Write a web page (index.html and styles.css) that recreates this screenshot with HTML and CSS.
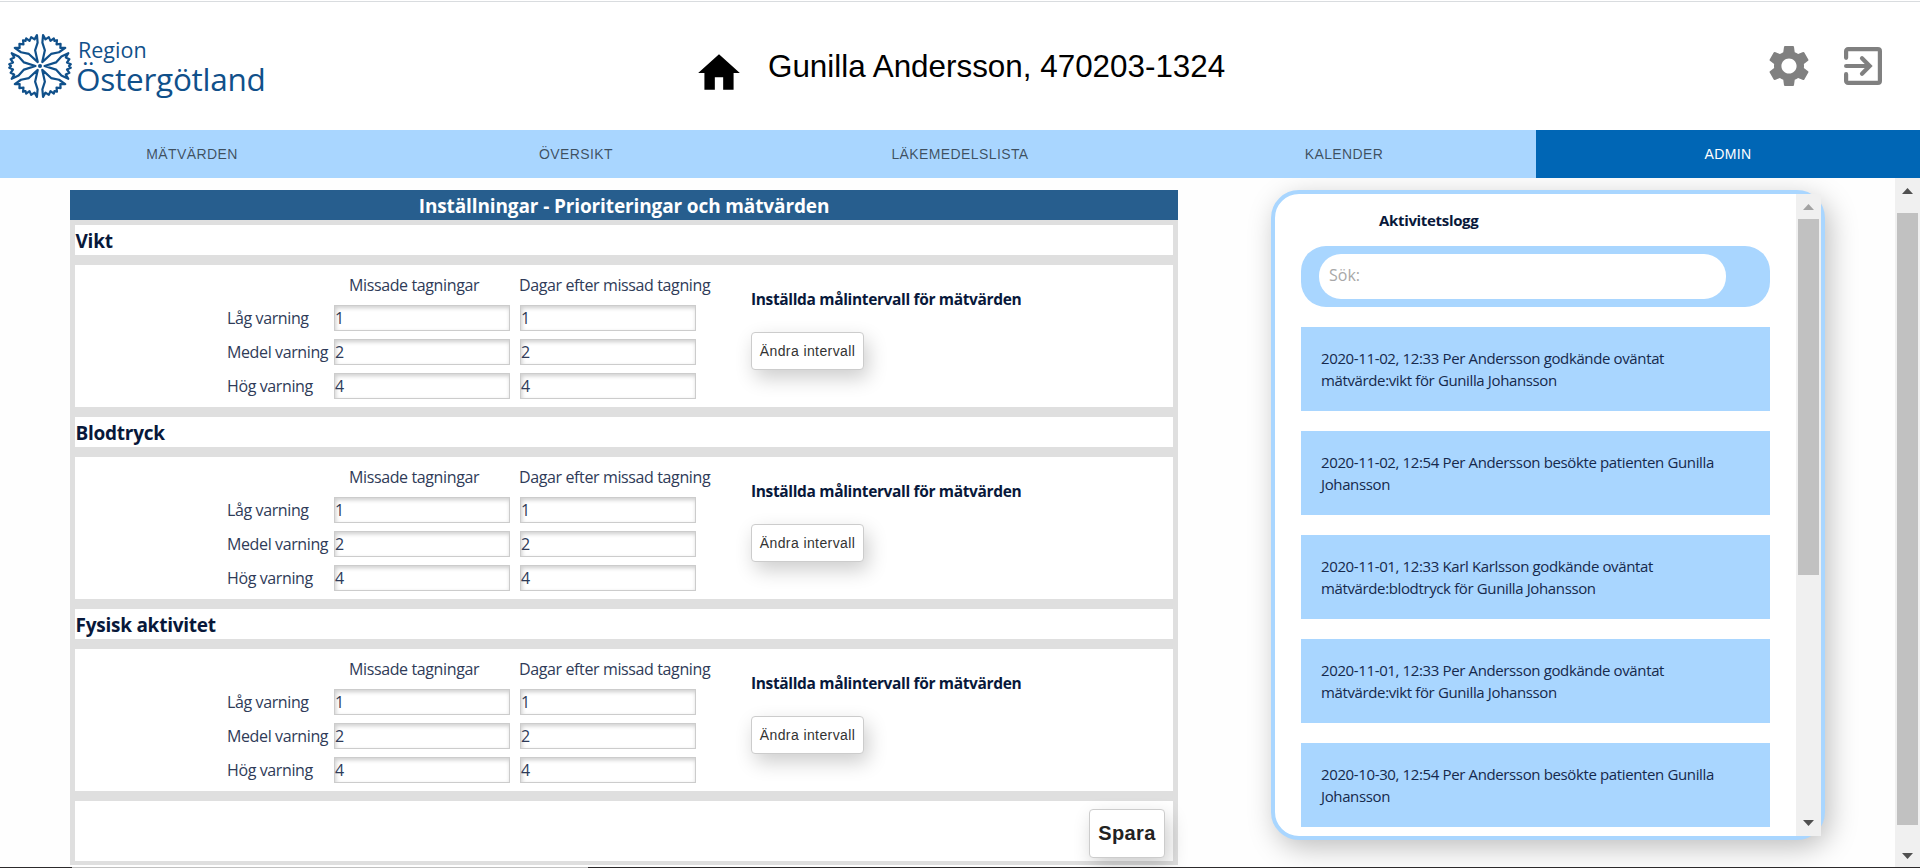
FILE: index.html
```html
<!DOCTYPE html>
<html lang="sv">
<head>
<meta charset="utf-8">
<title>Region Östergötland - Admin</title>
<link rel="stylesheet" href="styles.css">
</head>
<body>
<header class="header">
  <div class="logo">
    <svg class="logo-mark" viewBox="-33 -33 66 66" width="66" height="66">
      <defs>
        <path id="petal" d="M0-4.5-3.6-16-9.6-21.4-12.8-28.3-8.6-25.8-6.8-29.4-3.5-27-1.8-30.8 0-29 1.8-30.8 3.5-27 6.8-29.4 8.6-25.8 12.8-28.3 9.6-21.4 3.6-16Z"/>
      </defs>
      <g fill="none" stroke="#10508a" stroke-width="2.2" stroke-linejoin="round">
        <use href="#petal" transform="rotate(30)"/>
        <use href="#petal" transform="rotate(90)"/>
        <use href="#petal" transform="rotate(150)"/>
        <use href="#petal" transform="rotate(210)"/>
        <use href="#petal" transform="rotate(270)"/>
        <use href="#petal" transform="rotate(330)"/>
      </g>
      <circle r="2" fill="#10508a"/>
    </svg>
    <div class="logo-text">
      <span class="logo-small">Region</span>
      <span class="logo-large">Östergötland</span>
    </div>
  </div>
  <div class="patient">
    <svg class="home" viewBox="0 0 24 24" width="50" height="50"><path d="M10 20v-6h4v6h5v-8h3L12 3 2 12h3v8z"/></svg>
    <span class="patient-name">Gunilla Andersson, 470203-1324</span>
  </div>
  <div class="tools">
    <svg viewBox="0 0 24 24" width="48" height="48" fill="#808080"><path d="M19.43 12.98c.04-.32.07-.64.07-.98s-.03-.66-.07-.98l2.11-1.65c.19-.15.24-.42.12-.64l-2-3.46c-.12-.22-.39-.3-.61-.22l-2.49 1c-.52-.4-1.08-.73-1.69-.98l-.38-2.65C14.46 2.18 14.25 2 14 2h-4c-.25 0-.46.18-.49.42l-.38 2.65c-.61.25-1.17.59-1.69.98l-2.49-1c-.23-.09-.49 0-.61.22l-2 3.46c-.13.22-.07.49.12.64l2.11 1.65c-.04.32-.07.65-.07.98s.03.66.07.98l-2.11 1.65c-.19.15-.24.42-.12.64l2 3.46c.12.22.39.3.61.22l2.49-1c.52.4 1.08.73 1.69.98l.38 2.65c.03.24.24.42.49.42h4c.25 0 .46-.18.49-.42l.38-2.65c.61-.25 1.17-.59 1.69-.98l2.49 1c.23.09.49 0 .61-.22l2-3.46c.12-.22.07-.49-.12-.64l-2.11-1.65zM12 15.8c-2.1 0-3.8-1.7-3.8-3.8s1.7-3.8 3.8-3.8 3.8 1.7 3.8 3.8-1.7 3.8-3.8 3.8z"/></svg>
    <svg viewBox="0 0 38 38" width="38" height="38" fill="none" stroke="#808080" stroke-width="4.2" stroke-linecap="round" stroke-linejoin="round"><path d="M2.1 10.8V4.1a2 2 0 0 1 2-2h29.8a2 2 0 0 1 2 2v29.8a2 2 0 0 1-2 2H4.1a2 2 0 0 1-2-2v-6.7"/><path d="M2.1 19H25M18 11.3 25.7 19 18 26.7" stroke-linejoin="miter"/></svg>
  </div>
</header>

<nav class="tabs">
  <a class="tab">MÄTVÄRDEN</a>
  <a class="tab">ÖVERSIKT</a>
  <a class="tab">LÄKEMEDELSLISTA</a>
  <a class="tab">KALENDER</a>
  <a class="tab tab-active">ADMIN</a>
</nav>

<main class="main">
  <section class="settings">
    <h1 class="settings-title">Inställningar - Prioriteringar och mätvärden</h1>
    <div class="settings-body">
      <h2 class="group-title">Vikt</h2>
      <div class="group">
        <div class="limits">
          <span></span><span class="col-head col-missed">Missade tagningar</span><span class="col-head">Dagar efter missad tagning</span>
          <span class="label">Låg varning</span><span class="field">1</span><span class="field">1</span>
          <span class="label">Medel varning</span><span class="field">2</span><span class="field">2</span>
          <span class="label">Hög varning</span><span class="field">4</span><span class="field">4</span>
        </div>
        <div class="targets"><h3 class="targets-title">Inställda målintervall för mätvärden</h3><button class="button">Ändra intervall</button></div>
      </div>
      <h2 class="group-title">Blodtryck</h2>
      <div class="group">
        <div class="limits">
          <span></span><span class="col-head col-missed">Missade tagningar</span><span class="col-head">Dagar efter missad tagning</span>
          <span class="label">Låg varning</span><span class="field">1</span><span class="field">1</span>
          <span class="label">Medel varning</span><span class="field">2</span><span class="field">2</span>
          <span class="label">Hög varning</span><span class="field">4</span><span class="field">4</span>
        </div>
        <div class="targets"><h3 class="targets-title">Inställda målintervall för mätvärden</h3><button class="button">Ändra intervall</button></div>
      </div>
      <h2 class="group-title">Fysisk aktivitet</h2>
      <div class="group">
        <div class="limits">
          <span></span><span class="col-head col-missed">Missade tagningar</span><span class="col-head">Dagar efter missad tagning</span>
          <span class="label">Låg varning</span><span class="field">1</span><span class="field">1</span>
          <span class="label">Medel varning</span><span class="field">2</span><span class="field">2</span>
          <span class="label">Hög varning</span><span class="field">4</span><span class="field">4</span>
        </div>
        <div class="targets"><h3 class="targets-title">Inställda målintervall för mätvärden</h3><button class="button">Ändra intervall</button></div>
      </div>
      <div class="actions"><button class="button button-save">Spara</button></div>
    </div>
  </section>

  <aside class="log">
    <div class="log-content">
      <h2 class="log-title">Aktivitetslogg</h2>
      <div class="search"><div class="search-field">Sök:</div></div>
      <p class="entry">2020-11-02, 12:33 Per Andersson godkände oväntat<br>mätvärde:vikt för Gunilla Johansson</p>
      <p class="entry">2020-11-02, 12:54 Per Andersson besökte patienten Gunilla<br>Johansson</p>
      <p class="entry">2020-11-01, 12:33 Karl Karlsson godkände oväntat<br>mätvärde:blodtryck för Gunilla Johansson</p>
      <p class="entry">2020-11-01, 12:33 Per Andersson godkände oväntat<br>mätvärde:vikt för Gunilla Johansson</p>
      <p class="entry">2020-10-30, 12:54 Per Andersson besökte patienten Gunilla<br>Johansson</p>
    </div>
    <div class="scrollbar log-scrollbar">
      <svg class="arrow" viewBox="0 0 11 6" width="11" height="6"><path d="M0 6 5.5 0 11 6z" fill="#a3a3a3"/></svg>
      <div class="thumb log-thumb"></div>
      <svg class="arrow arrow-down" viewBox="0 0 11 6" width="11" height="6"><path d="M0 0 5.5 6 11 0z" fill="#505050"/></svg>
    </div>
  </aside>

  <div class="scrollbar page-scrollbar">
    <svg class="arrow" viewBox="0 0 11 6" width="11" height="6"><path d="M0 6 5.5 0 11 6z" fill="#505050"/></svg>
    <div class="thumb page-thumb"></div>
    <svg class="arrow arrow-down" viewBox="0 0 11 6" width="11" height="6"><path d="M0 0 5.5 6 11 0z" fill="#505050"/></svg>
  </div>
</main>
<footer class="edge"><div class="edge-light"></div></footer>
</body>
</html>
```
FILE: styles.css
```css
* { box-sizing: border-box; }

body {
  margin: 0;
  height: 868px;
  overflow: hidden;
  display: flex;
  flex-direction: column;
  background: #fff;
  color: #08183a;
  font-family: "Open Sans", "Noto Sans", sans-serif;
}

h1, h2, h3, p { margin: 0; }

/* Header */
.header {
  height: 130px;
  flex: none;
  display: flex;
  align-items: flex-start;
  background: linear-gradient(#fff 1px, #d9dcdf 1px, #d9dcdf 2px, #fff 2px);
}
.logo { display: flex; width: 694px; padding: 32px 0 0 7px; }
.logo-mark { flex: none; margin-top: 1px; }
.logo-text { display: flex; flex-direction: column; padding-left: 3px; color: #10508a; font-weight: 500; }
.logo-small { font-size: 21.5px; line-height: 24px; margin: 6px 0 0 2px; }
.logo-large { font-size: 31.5px; line-height: 36px; margin-top: -1px; letter-spacing: -0.25px; }
.patient { display: flex; width: 1071px; padding-top: 48px; }
.home { flex: none; }
.patient-name { font: 31.4px/38px "Liberation Sans", Arial, sans-serif; color: #000; margin-left: 24px; }
.tools { display: flex; align-items: center; gap: 31px; padding-top: 42px; }

/* Tabs */
.tabs { display: grid; grid-template-columns: repeat(5, 1fr); height: 48px; flex: none; background: #a9d6ff; }
.tab {
  font: 14px/48px "Liberation Sans", Arial, sans-serif;
  letter-spacing: 0.4px;
  text-align: center;
  color: rgba(0, 0, 0, 0.64);
}
.tab-active { background: #0066b5; color: #fff; }

.main { display: flex; height: 689px; flex: none; overflow: hidden; background: #fefefe; }

/* Settings */
.settings { width: 1108px; margin: 12px 0 0 70px; flex: none; }
.settings-title {
  height: 30px;
  background: #275e8e;
  color: #fff;
  font-size: 19px;
  font-weight: 700;
  line-height: 32px;
  letter-spacing: -0.12px;
  text-align: center;
}
.settings-body { height: 645px; padding: 5px; background: #dfdfdf; display: flex; flex-direction: column; gap: 10px; }
.group-title { height: 30px; flex: none; padding-left: 0.5px; background: #fff; font-size: 19px; line-height: 32px; letter-spacing: -0.25px; }
.group { display: flex; height: 142px; flex: none; padding: 7px 0 0 152px; background: #fff; }
.limits {
  display: grid;
  grid-template-columns: 107px 186px 231px;
  grid-template-rows: 33px repeat(3, 34px);
  width: 524px;
  font-size: 16px;
  line-height: 27px;
  letter-spacing: -0.38px;
  white-space: nowrap;
  color: #2f3b58;
}
.col-head { margin-left: -1px; }
.col-missed { padding-left: 16px; }
.field {
  width: 176px;
  height: 26px;
  border: 1px solid #ccc;
  line-height: 25px;
  box-shadow: inset 1px 2px 4px rgba(0, 0, 0, 0.2);
}
.targets { padding-top: 14px; }
.targets-title { height: 46px; font-size: 15.5px; font-weight: 700; line-height: 26px; letter-spacing: -0.35px; }
.button {
  display: block;
  width: 113px;
  height: 38px;
  padding: 0;
  border: 1px solid #ccc;
  border-radius: 4px;
  background: #fff;
  color: #333;
  font: 14px/34px "Liberation Sans", Arial, sans-serif;
  letter-spacing: 0.4px;
  white-space: nowrap;
  box-shadow: 4px 8px 20px rgba(0, 0, 0, 0.2);
}
.actions { height: 60px; flex: none; padding: 8px 8px 0 0; background: #fff; }
.button-save { width: 76px; height: 49px; padding-bottom: 2px; margin-left: auto; font-size: 20px; font-weight: 700; color: #222; }

/* Activity log */
.log {
  width: 554px;
  height: 650px;
  margin: 12px 0 0 93px;
  flex: none;
  display: flex;
  border: 4px solid #a9d6ff;
  border-radius: 28px;
  background: #fff;
  box-shadow: 5px 8px 28px rgba(0, 0, 0, 0.25);
}
.log-content { width: 521px; padding: 15px 26px 0; }
.log-title { padding-left: 78px; height: 37px; font-size: 15px; font-weight: 700; line-height: 22px; letter-spacing: -0.33px; }
.search { height: 61px; padding: 8px 0 0 18px; border-radius: 25px; background: #a9d6ff; }
.search-field { width: 407px; height: 45px; padding-left: 10px; border-radius: 22px; background: #fff; color: #a8a8a8; font-size: 16px; line-height: 43px; }
.entry { height: 84px; margin-top: 20px; padding: 20px; background: #a9d6ff; font-size: 15px; line-height: 22px; letter-spacing: -0.37px; white-space: nowrap; color: #16294c; }

/* Scrollbars */
.scrollbar { width: 25px; flex: none; display: flex; flex-direction: column; align-items: center; background: #f0f0f0; padding-top: 10px; }
.arrow { flex: none; }
.arrow-down { margin-top: auto; }
.thumb { width: 21px; flex: none; background: #c1c1c1; }
.log-scrollbar { height: 642px; padding-bottom: 10px; }
.log-thumb { height: 356px; margin-top: 9px; }
.page-scrollbar { margin-left: auto; padding-bottom: 8px; }
.page-thumb { height: 612px; margin-top: 19px; }

.edge { height: 1px; flex: none; padding-left: 72px; background: #2c2a2b; }
.edge-light { width: 516px; height: 1px; background: #c0c0c0; }
```
